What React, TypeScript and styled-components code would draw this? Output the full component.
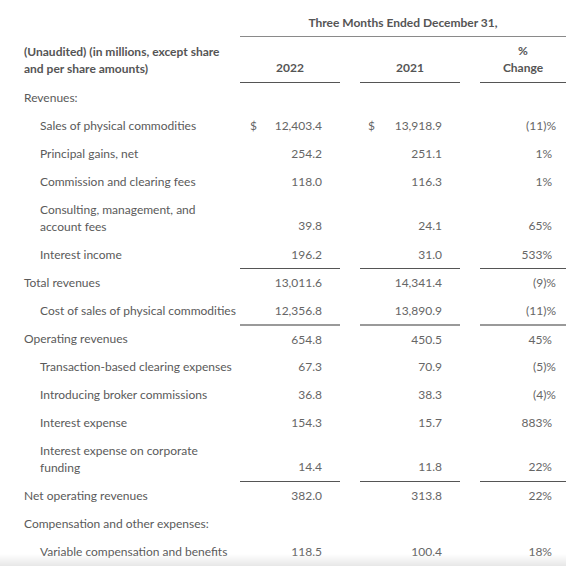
import React from "react";
import styled, { createGlobalStyle, css } from "styled-components";

const Global = createGlobalStyle`
  html, body { margin: 0; padding: 0; background: #fff; }
  body { font-family: "Lato", "Open Sans", sans-serif; color: #5c5c5c; }
`;

const Page = styled.div`
  width: 566px;
  height: 566px;
  overflow: hidden;
  position: relative;
  padding: 9px 0 0 24px;
  box-sizing: border-box;
  font-size: 12px;
`;

const Grid = styled.div`
  display: grid;
  grid-template-columns: 196px 100px 100px 86px;
  column-gap: 20px;
`;

const Caption = styled.div`
  grid-column: 2 / 5;
  height: 28px;
  display: flex;
  align-items: center;
  justify-content: center;
  font-weight: 700;
  color: #555;
  border-bottom: 1.5px solid #8a8a8a;
  box-sizing: border-box;
`;

const Spacer = styled.div``;

const HeadCell = styled.div<{ $align?: "left" | "center" }>`
  height: 46px;
  display: flex;
  flex-direction: column;
  justify-content: center;
  align-items: ${(p) => (p.$align === "left" ? "flex-start" : "center")};
  line-height: 17px;
  font-weight: 700;
  color: #555;
  white-space: nowrap;
  box-sizing: border-box;
  ${(p) =>
    p.$align !== "left" &&
    css`
      justify-content: flex-end;
      padding-bottom: 6px;
      border-bottom: 1.5px solid #555;
    `}
`;

type Rule = "dark" | "light" | undefined;

const Label = styled.div<{ $indent?: boolean; $tall?: boolean }>`
  height: ${(p) => (p.$tall ? "45px" : "28px")};
  display: flex;
  flex-direction: column;
  justify-content: center;
  line-height: 17px;
  padding-left: ${(p) => (p.$indent ? "16px" : "0")};
  white-space: nowrap;
  color: #5a5a5a;
`;

const Num = styled.div<{ $rule?: Rule; $tall?: boolean; $pad: number; $dpad: number }>`
  display: flex;
  align-items: ${(p) => (p.$tall ? "flex-end" : "center")};
  justify-content: space-between;
  padding: 0 ${(p) => p.$pad}px 0 ${(p) => p.$dpad}px;
  padding-bottom: ${(p) => (p.$tall ? "6px" : "0")};
  color: #666;
  box-sizing: border-box;
  line-height: 17px;
  ${(p) =>
    p.$rule === "dark" &&
    css`
      border-top: 1.5px solid #555;
    `}
  ${(p) =>
    p.$rule === "light" &&
    css`
      border-top: 2px solid #9a9a9a;
    `}
`;

const Dollar = styled.span``;
const Value = styled.span`
  margin-left: auto;
`;

const Fade = styled.div`
  position: absolute;
  left: 0;
  right: 0;
  bottom: 0;
  height: 12px;
  background: linear-gradient(to bottom, rgba(235, 235, 235, 0), rgba(225, 225, 225, 0.8));
  pointer-events: none;
`;

type Row = {
  label: string[];
  indent?: boolean;
  a?: string;
  b?: string;
  c?: string;
  dollar?: boolean;
  rule?: Rule;
};

const rows: Row[] = [
  { label: ["Revenues:"] },
  { label: ["Sales of physical commodities"], indent: true, a: "12,403.4", b: "13,918.9", c: "(11)%", dollar: true },
  { label: ["Principal gains, net"], indent: true, a: "254.2", b: "251.1", c: "1%" },
  { label: ["Commission and clearing fees"], indent: true, a: "118.0", b: "116.3", c: "1%" },
  { label: ["Consulting, management, and", "account fees"], indent: true, a: "39.8", b: "24.1", c: "65%" },
  { label: ["Interest income"], indent: true, a: "196.2", b: "31.0", c: "533%" },
  { label: ["Total revenues"], a: "13,011.6", b: "14,341.4", c: "(9)%", rule: "dark" },
  { label: ["Cost of sales of physical commodities"], indent: true, a: "12,356.8", b: "13,890.9", c: "(11)%" },
  { label: ["Operating revenues"], a: "654.8", b: "450.5", c: "45%", rule: "light" },
  { label: ["Transaction-based clearing expenses"], indent: true, a: "67.3", b: "70.9", c: "(5)%" },
  { label: ["Introducing broker commissions"], indent: true, a: "36.8", b: "38.3", c: "(4)%" },
  { label: ["Interest expense"], indent: true, a: "154.3", b: "15.7", c: "883%" },
  { label: ["Interest expense on corporate", "funding"], indent: true, a: "14.4", b: "11.8", c: "22%" },
  { label: ["Net operating revenues"], a: "382.0", b: "313.8", c: "22%", rule: "dark" },
  { label: ["Compensation and other expenses:"] },
  { label: ["Variable compensation and benefits"], indent: true, a: "118.5", b: "100.4", c: "18%" },
];

export default function App() {
  return (
    <>
      <Global />
      <Page>
        <Grid>
          <Spacer />
          <Caption>Three Months Ended December 31,</Caption>
          <HeadCell $align="left">
            <span>(Unaudited) (in millions, except share</span>
            <span>and per share amounts)</span>
          </HeadCell>
          <HeadCell>2022</HeadCell>
          <HeadCell>2021</HeadCell>
          <HeadCell>
            <span>%</span>
            <span>Change</span>
          </HeadCell>
          {rows.map((r, i) => {
            const tall = r.label.length > 1;
            return (
              <React.Fragment key={i}>
                <Label $indent={r.indent} $tall={tall}>
                  {r.label.map((l, j) => (
                    <span key={j}>{l}</span>
                  ))}
                </Label>
                <Num $rule={r.rule} $tall={tall} $pad={18} $dpad={10}>
                  {r.dollar && <Dollar>$</Dollar>}
                  <Value>{r.a}</Value>
                </Num>
                <Num $rule={r.rule} $tall={tall} $pad={18} $dpad={8}>
                  {r.dollar && <Dollar>$</Dollar>}
                  <Value>{r.b}</Value>
                </Num>
                <Num $rule={r.rule} $tall={tall} $pad={r.c && r.c.startsWith("(") ? 10 : 14} $dpad={0}>
                  <Value>{r.c}</Value>
                </Num>
              </React.Fragment>
            );
          })}
        </Grid>
        <Fade />
      </Page>
    </>
  );
}
